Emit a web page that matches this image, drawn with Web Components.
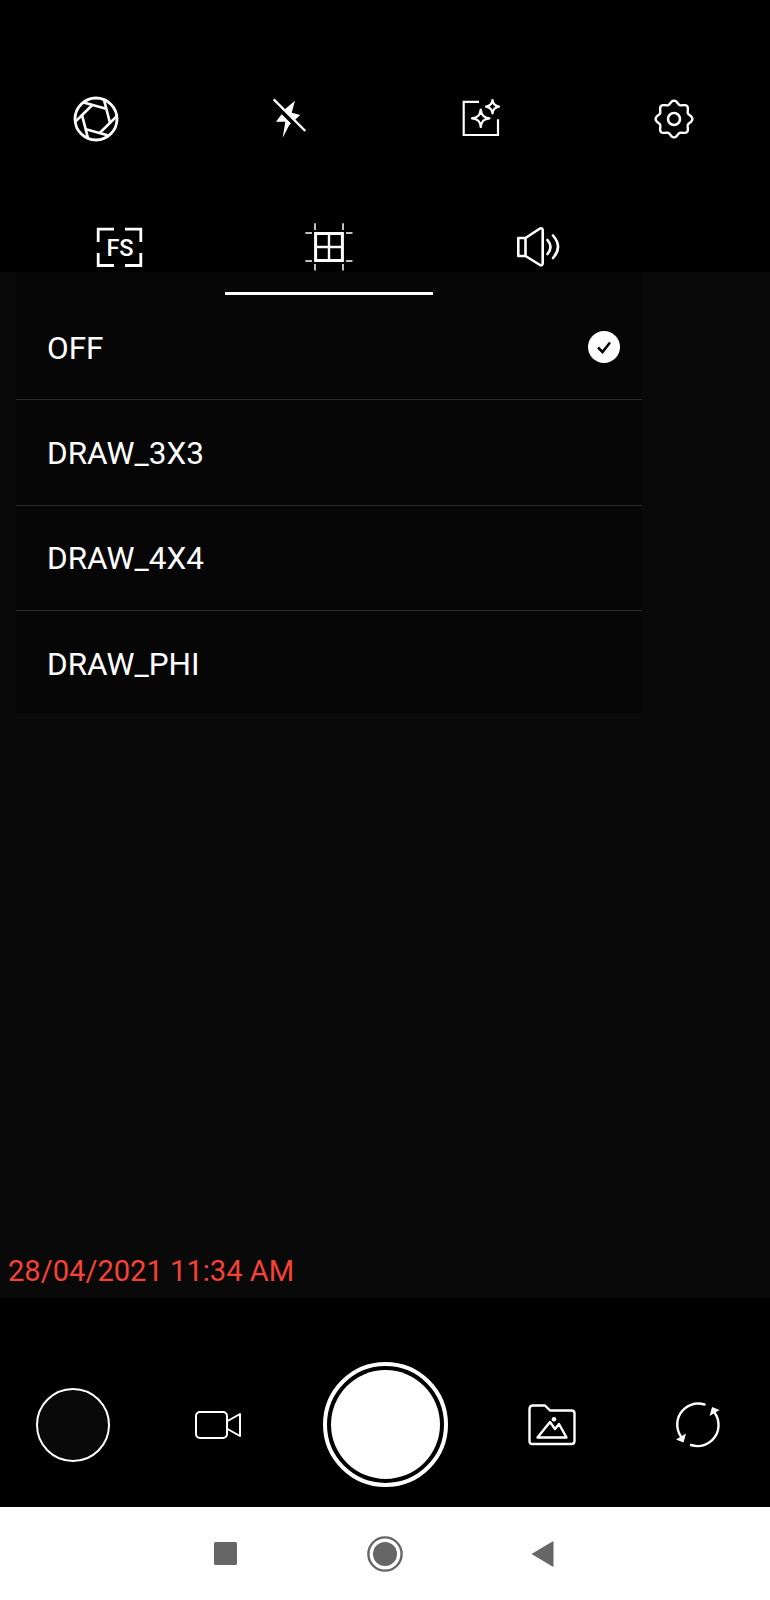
<!DOCTYPE html>
<html>
<head>
<meta charset="utf-8">
<title>Camera</title>
<style>
  html, body { margin: 0; background: #000; }
  body { width: 770px; height: 1600px; font-family: Roboto, "Liberation Sans", sans-serif; }
</style>
</head>
<body>
<camera-app>
  <top-bar>
    <cam-icon name="aperture"></cam-icon>
    <cam-icon name="flash"></cam-icon>
    <cam-icon name="filter"></cam-icon>
    <cam-icon name="gear"></cam-icon>
  </top-bar>
  <preview-area stamp="28/04/2021 11:34 AM">
    <settings-panel>
      <tab-strip slot="tabs">
        <cam-icon name="fs"></cam-icon>
        <cam-icon name="grid" active></cam-icon>
        <cam-icon name="sound"></cam-icon>
      </tab-strip>
      <option-row checked>OFF</option-row>
      <option-row>DRAW_3X3</option-row>
      <option-row>DRAW_4X4</option-row>
      <option-row>DRAW_PHI</option-row>
    </settings-panel>
  </preview-area>
  <bottom-bar>
    <span class="thumb"></span>
    <cam-icon name="video"></cam-icon>
    <shutter-button></shutter-button>
    <cam-icon name="gallery"></cam-icon>
    <cam-icon name="flip"></cam-icon>
  </bottom-bar>
  <nav-bar></nav-bar>
</camera-app>

<script>
// gear outline is a wavy circle, easier to compute than to write by hand
function gearPath() {
  let d = '';
  for (let i = 0; i < 96; i++) {
    const a = i / 96 * Math.PI * 2;
    const r = 16.7 + 1.7 * Math.cos(8 * a);
    d += (i ? 'L' : 'M') + (24 + r * Math.sin(a)).toFixed(2) + ' ' + (24 - r * Math.cos(a)).toFixed(2);
  }
  return d + 'Z';
}

const blades = [0, 60, 120, 180, 240, 300]
  .map(a => `<path d="M10.7 7.300 L35 14" transform="rotate(${a} 24 24)"/>`).join('');

const icons = {
  aperture: `<circle cx="24" cy="24" r="21" stroke-width="2.800"/><g stroke-width="2.600">${blades}</g>`,
  flash: `<path d="M30 5.700 L26.700 17.700 L35.300 20 L24.300 30 L17.700 42.700 L20.300 26.700 L11 26.700 L21 13.300 Z" fill="#fff" stroke="none"/>
    <path d="M7 6 L38.500 37.500" stroke="#000" stroke-width="5"/>
    <path d="M8.700 4.300 L40.300 36" stroke-width="2.400"/>`,
  filter: `<path d="M22 6.800 H6.700 V40 H41 V24.300" stroke-width="2.200"/>
    <path d="M23.750 14.500 C24.500 20 26.500 22.500 32.500 23.300 C26.500 24 24.500 26.500 23.750 32 C23 26.500 21 24 15 23.300 C21 22.500 23 20 23.750 14.500 Z" stroke-width="2.200" stroke-linejoin="round"/>
    <path d="M35.500 5 C36 9 37.500 11 42 11.700 C37.500 12.400 36 14.500 35.500 18.400 C35 14.500 33.500 12.400 29 11.700 C33.500 11 35 9 35.500 5 Z" stroke-width="2.200" stroke-linejoin="round"/>`,
  gear: `<circle cx="24" cy="24" r="6"/><path d="${gearPath()}" stroke-width="2.400" stroke-linejoin="round"/>`,
  fs: `<path d="M18 6.200 H2.200 V19 M29 6.200 H44.800 V19 M2.200 30 V42.500 H18 M44.800 30 V42.500 H29" stroke-width="2.800"/>
    <text x="24" y="33" text-anchor="middle" font-size="23.500" font-weight="500" font-family="Roboto, sans-serif" fill="#fff" stroke="none">FS</text>`,
  grid: `<path d="M10.600 10.600 H37.400 V37.400 H10.600 Z" stroke-width="3"/>
    <path d="M24 10 V38 M10 24 H38" stroke-width="2.400"/>
    <path d="M10 .3 V7 M38 .3 V7 M10 41 V47.500 M38 41 V47.500 M.3 10 H7 M41 10 H47.500 M.3 38 H7 M41 38 H47.500" stroke-width="1.500"/>`,
  sound: `<path d="M4.300 15 H11.500 L26 5.500 Q28.700 4.600 28.700 7.500 V40 Q28.700 43 26 42 L11.500 33 H4.300 Z M11.500 15 V33" stroke-width="2.600" stroke-linejoin="round"/>
    <path d="M33.500 17 Q39.500 24 33.500 31 M39 12.500 Q49 24 39 35" stroke-width="2.600" stroke-linecap="round"/>`,
  video: `<rect x="2" y="11" width="31" height="26" rx="4" stroke-width="2"/>
    <path d="M33.500 20 L46 13 V35 L33.500 28" stroke-width="2" stroke-linejoin="round"/>`,
  gallery: `<path d="M1.500 8 Q1.500 4.500 5 4.500 H17 L22 9.500 H43.500 Q46.500 9.500 46.500 12.500 V40 Q46.500 43 43.500 43 H4.500 Q1.500 43 1.500 40 Z" stroke-width="2.400" stroke-linejoin="round"/>
    <path d="M9.500 36.500 L22 21 L27 28 L31 23 L38.500 36.500 Z" stroke-width="2.400" stroke-linejoin="round"/>
    <circle cx="26" cy="18.300" r="2.300" fill="#fff" stroke="none"/>`,
  flip: `<path d="M30.500 3.500 A21 21 0 0 0 9 38" stroke-width="2.400" stroke-linecap="round"/>
    <path d="M17 44 A21 21 0 0 0 38.600 9.400" stroke-width="2.400" stroke-linecap="round"/>
    <path d="M2 38.500 L12 32.500 L9.500 41.500 Z M45.600 8.900 L35.600 14.900 L38.100 5.900 Z" fill="#fff" stroke="none"/>`
};

customElements.define('cam-icon', class extends HTMLElement {
  connectedCallback() {
    const shadow = this.attachShadow({mode: 'open'});
    const name = this.getAttribute('name');
    shadow.innerHTML = `
    <style>
      :host { display: flex; justify-content: center; }
      svg { display: block; overflow: visible; fill: none; stroke: #fff; stroke-width: 2.500; }
    </style>
    <svg width="48" height="48" viewBox="0 0 48 48">${icons[name]}</svg>`;
  }
});

customElements.define('camera-app', class extends HTMLElement {
  connectedCallback() {
    this.attachShadow({mode: 'open'}).innerHTML = `
    <style>
      :host { display: flex; flex-direction: column; width: 770px; height: 1600px; background: #000; }
    </style>
    <slot></slot>`;
  }
});

customElements.define('top-bar', class extends HTMLElement {
  connectedCallback() {
    this.attachShadow({mode: 'open'}).innerHTML = `
    <style>
      :host { display: grid; grid-template-columns: repeat(4, 1fr); align-items: center; height: 200px; box-sizing: border-box; padding: 95px 0 57px; }
    </style>
    <slot></slot>`;
  }
});

customElements.define('preview-area', class extends HTMLElement {
  connectedCallback() {
    const stamp = this.getAttribute('stamp');
    this.attachShadow({mode: 'open'}).innerHTML = `
    <style>
      :host { display: flex; flex-direction: column; justify-content: space-between; height: 1098px; background: linear-gradient(#000 72px, #090909 72px); }
      .stamp { color: #f44336; font-size: 29.100px; line-height: 36px; padding: 0 0 9px 8px; }
    </style>
    <slot></slot>
    <div class="stamp">${stamp}</div>`;
  }
});

customElements.define('settings-panel', class extends HTMLElement {
  connectedCallback() {
    this.attachShadow({mode: 'open'}).innerHTML = `
    <style>
      :host { display: block; width: 626px; height: 513px; overflow: hidden; margin-left: 16px; background: linear-gradient(transparent 72px, #060606 72px); }
    </style>
    <slot name="tabs"></slot>
    <slot></slot>`;
  }
});

customElements.define('tab-strip', class extends HTMLElement {
  connectedCallback() {
    this.attachShadow({mode: 'open'}).innerHTML = `
    <style>
      :host { display: grid; grid-template-columns: repeat(3, 1fr); height: 95px; }
      ::slotted(cam-icon) { box-sizing: border-box; height: 95px; padding-top: 23px; }
      ::slotted(cam-icon[active]) { border-bottom: 3px solid #fff; }
    </style>
    <slot></slot>`;
  }
});

customElements.define('option-row', class extends HTMLElement {
  connectedCallback() {
    const checked = this.hasAttribute('checked');
    this.attachShadow({mode: 'open'}).innerHTML = `
    <style>
      :host { display: flex; align-items: center; justify-content: space-between; height: 105.300px; box-sizing: border-box; padding: 2px 22px 0 31px; border-bottom: 1px solid #2a2a2a; color: #fff; font-size: 31.500px; }
      :host(:last-child) { border-bottom: 0; }
      svg { display: block; margin-top: -3px; }
    </style>
    <slot></slot>
    ${checked ? `<svg width="32" height="32" viewBox="0 0 32 32"><circle cx="16" cy="16" r="16" fill="#fff"/><path d="M10 16.500 L14.500 21 L22 11.500" fill="none" stroke="#000" stroke-width="2.500"/></svg>` : ''}`;
  }
});

customElements.define('bottom-bar', class extends HTMLElement {
  connectedCallback() {
    this.attachShadow({mode: 'open'}).innerHTML = `
    <style>
      :host { display: flex; align-items: center; height: 209px; box-sizing: border-box; padding-top: 44px; }
      ::slotted(cam-icon) { width: 48px; }
      ::slotted(.thumb) { box-sizing: border-box; width: 74px; height: 74px; margin-left: 35.500px; border: 2px solid #fff; border-radius: 50%; background: #090909; }
      ::slotted(cam-icon:nth-of-type(1)) { margin-left: 84.500px; }
      ::slotted(shutter-button) { margin-left: 80.500px; }
      ::slotted(cam-icon:nth-of-type(2)) { margin-left: 80.500px; }
      ::slotted(cam-icon:nth-of-type(3)) { margin-left: 97.500px; }
    </style>
    <slot></slot>`;
  }
});

customElements.define('shutter-button', class extends HTMLElement {
  connectedCallback() {
    this.attachShadow({mode: 'open'}).innerHTML = `
    <style>
      :host { display: block; box-sizing: border-box; width: 125px; height: 125px; border: 4px solid #fff; border-radius: 50%; padding: 4px; }
      div { width: 100%; height: 100%; background: #fff; border-radius: 50%; }
    </style>
    <div></div>`;
  }
});

customElements.define('nav-bar', class extends HTMLElement {
  connectedCallback() {
    this.attachShadow({mode: 'open'}).innerHTML = `
    <style>
      :host { display: flex; align-items: center; height: 93px; box-sizing: border-box; padding: 0 0 0 214px; background: #fff; }
      svg { display: block; }
      svg + svg { margin-left: 130px; }
      svg + svg + svg { margin-left: 128px; }
    </style>
    <svg width="23" height="23" viewBox="0 0 23 23"><rect width="23" height="23" rx="1.500" fill="#666"/></svg>
    <svg width="36" height="36" viewBox="0 0 36 36"><circle cx="18" cy="18" r="16.600" fill="none" stroke="#666" stroke-width="2.400"/><circle cx="18" cy="18" r="12" fill="#666"/></svg>
    <svg width="23" height="26" viewBox="0 0 23 26"><path d="M22.500 1 Q22.500 0 21.500 .5 L.5 13 L21.500 25.500 Q22.500 26 22.500 25 Z" fill="#666"/></svg>`;
  }
});
</script>
</body>
</html>
